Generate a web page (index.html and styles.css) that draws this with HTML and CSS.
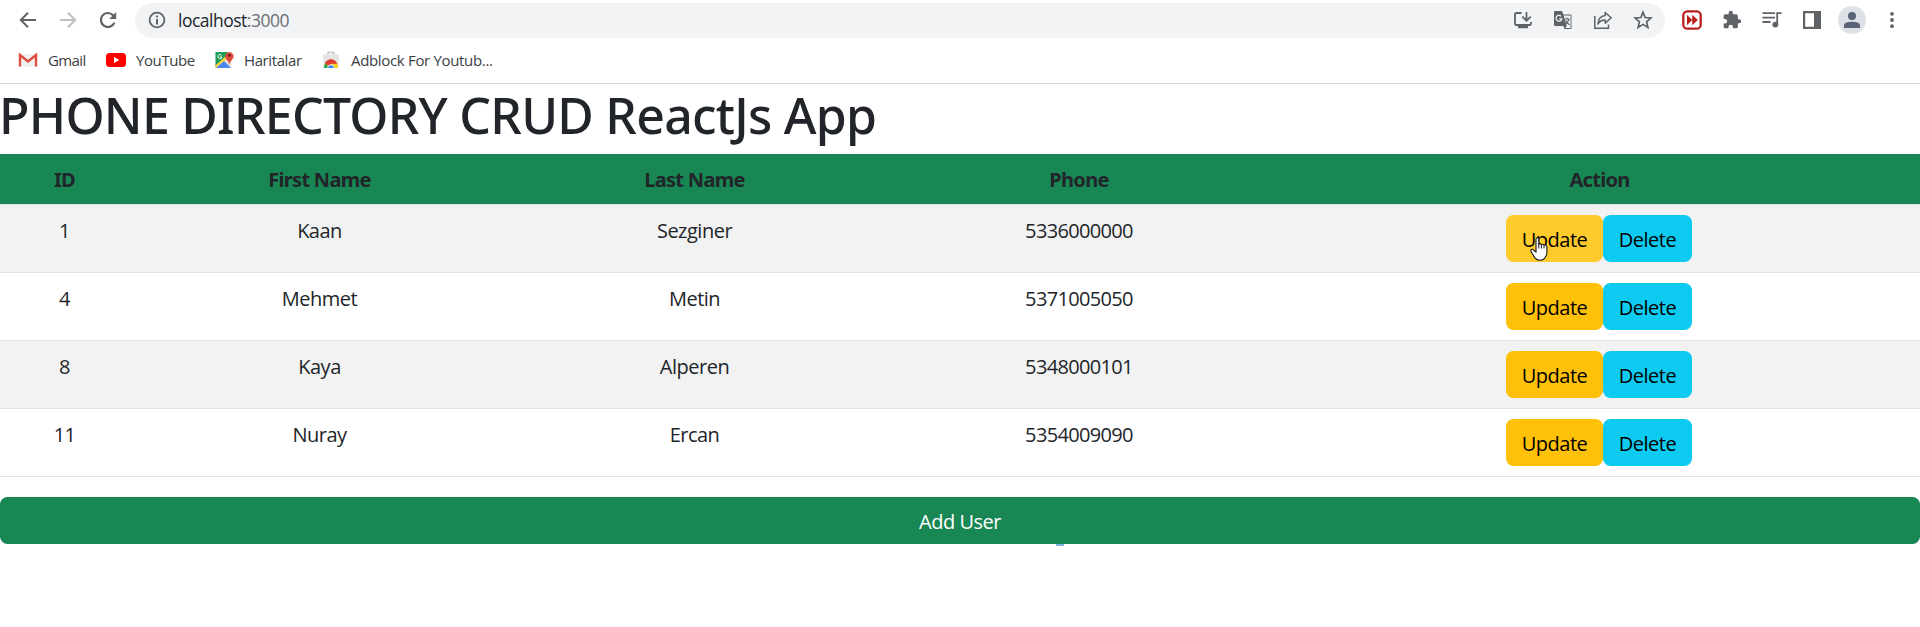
FILE: index.html
```
<!DOCTYPE html>
<html lang="en">
<head>
<meta charset="utf-8">
<title>Phone Directory</title>
<link rel="stylesheet" href="styles.css">
</head>
<body>
<header class="browser">
  <div class="toolbar">
    <nav class="nav">
      <svg class="nav-icon" width="20" height="20" viewBox="0 0 20 20" fill="none" stroke="#5f6368" stroke-width="2"><path d="M18 10H3M10 2.8L2.8 10l7.2 7.2"/></svg>
      <svg class="nav-icon" width="20" height="20" viewBox="0 0 20 20" fill="none" stroke="#bdc0c3" stroke-width="2"><path d="M2 10h15M10 2.8l7.2 7.2-7.2 7.2"/></svg>
      <svg class="nav-icon" width="20" height="20" viewBox="0 0 20 20" fill="none" stroke="#5f6368" stroke-width="2.2"><path d="M16.4 12.6A7 7 0 1 1 15 5.2L16.6 7"/><path d="M18.2 2v7h-7z" fill="#5f6368" stroke="none"/></svg>
    </nav>
    <div class="address">
      <svg class="info" width="18" height="18" viewBox="0 0 18 18"><circle cx="9" cy="9" r="7.4" fill="none" stroke="#5f6368" stroke-width="1.8"/><path d="M8 4.6h2v2H8zM8 8h2v5.4H8z" fill="#5f6368"/></svg>
      <span class="url">localhost<span class="port">:3000</span></span>
      <div class="address-actions">
        <svg width="20" height="20" viewBox="0 0 20 20" fill="none" stroke="#5f6368" stroke-width="1.8"><path d="M8.5 3H3.2Q2 3 2 4.2v9.6Q2 15 3.2 15h13.6Q18 15 18 13.8V12M13.5 2v8M9.3 6.6l4.2 4.2 4.2-4.2"/><path d="M5 15h10v3.200H5z" fill="#5f6368" stroke="none"/></svg>
        <svg width="20" height="20" viewBox="0 0 20 20"><path d="M2 1h7l1.3 3.6H17.500q1 0 1 1V18q0 1-1 1h-6L10.300 16H2.200Q1 16 1 15V2Q1 1 2 1z" fill="#5f6368"/><path d="M10.700 5.500h6.900v12.600H12.300l1.400-2z" fill="#f1f3f4"/><path d="M8.200 6.400A2.900 2.900 0 1 0 8.800 8.800H6.200" fill="none" stroke="#f1f3f4" stroke-width="1.300"/><path d="M11.800 9h5M14 7.500V9M16 9q-1 4-3.700 5.500M12.800 10.500q1 2.500 3.800 4.500" fill="none" stroke="#5f6368" stroke-width="1.100"/></svg>
        <svg width="20" height="20" viewBox="0 0 20 20" fill="none" stroke="#5f6368" stroke-width="1.500"><path d="M1.800 6v12.200H15.500V14.500"/><path d="M12.200 2.500l6 5.300-6 5.300V10Q7.500 9.800 5 14q.3-7.700 7.200-8.500z" stroke-linejoin="round"/></svg>
        <svg width="20" height="20" viewBox="0 0 20 20" fill="none" stroke="#5f6368" stroke-width="1.700"><path d="M10 2.300l2.200 5.200 5.700.5-4.300 3.800 1.300 5.600-4.900-3-4.900 3 1.300-5.600L2.100 8l5.700-.5z"/></svg>
      </div>
    </div>
    <div class="extensions">
      <svg width="20" height="20" viewBox="0 0 20 20"><rect x="1.300" y="1.300" width="17.400" height="17.400" rx="4" fill="#fff" stroke="#b9201d" stroke-width="2.300"/><path d="M5 4.800l5.200 5.200L5 15.200zM10.200 4.800l5.600 5.200-5.600 5.200z" fill="#b9201d"/></svg>
      <svg width="20" height="20" viewBox="0 0 24 24" fill="#5f6368"><path d="M20.500 11H19V7c0-1.100-.9-2-2-2h-4V3.500a2.500 2.500 0 0 0-5 0V5H4c-1.100 0-2 .9-2 2v3.800h1.500a2.700 2.700 0 0 1 0 5.400H2V20c0 1.100.9 2 2 2h3.800v-1.500a2.700 2.700 0 0 1 5.400 0V22H17c1.100 0 2-.9 2-2v-4h1.500a2.500 2.500 0 0 0 0-5z"/></svg>
      <svg width="20" height="20" viewBox="0 0 20 20" fill="none" stroke="#5f6368" stroke-width="1.800"><path d="M.5 3.200h12.500M.5 7.600h12.500M.5 12h8M15.200 14.500V3.200h4.300"/><circle cx="13.300" cy="14.600" r="2.900" fill="#5f6368" stroke="none"/></svg>
      <svg width="20" height="20" viewBox="0 0 20 20"><path d="M1 1h18v18H1zM3.200 3.200v13.600H12V3.200z" fill="#5f6368" fill-rule="evenodd"/></svg>
      <svg class="avatar" width="28" height="28" viewBox="0 0 28 28"><circle cx="14" cy="14" r="14" fill="#dee1e6"/><circle cx="14" cy="10" r="4" fill="#5a6377"/><path d="M6 22v-2.500Q6 15.800 14 15.800t8 3.700V22z" fill="#5a6377"/></svg>
      <svg width="20" height="20" viewBox="0 0 20 20" fill="#5f6368"><circle cx="10" cy="3.800" r="1.900"/><circle cx="10" cy="10" r="1.900"/><circle cx="10" cy="16.200" r="1.900"/></svg>
    </div>
  </div>
  <div class="bookmarks">
    <a class="bookmark gmail"><svg width="20" height="20" viewBox="0 0 20 20"><path d="M3 4h14v13H3z" fill="#f1f1f1"/><path d="M2 16.500V5l8 6.500L18 5v11.500" fill="none" stroke="#dc4b3e" stroke-width="2.400"/></svg><span>Gmail</span></a>
    <a class="bookmark youtube"><svg width="20" height="20" viewBox="0 0 20 20"><rect y="3" width="20" height="14" rx="3.500" fill="#f00"/><path d="M8 7l5.300 3L8 13z" fill="#fff"/></svg><span>YouTube</span></a>
    <a class="bookmark maps"><svg width="20" height="20" viewBox="0 0 20 20"><rect x="1.500" y="2" width="16" height="16" rx="1.500" fill="#e6e6e6"/><path d="M1.500 2h12L14 7 1.500 17.500z" fill="#1f9d58"/><path d="M2 18l8-7 7 7z" fill="#4a89f3"/><path d="M1.500 15.500L13 5l2 2L3 18H1.500z" fill="#fdd545"/><path d="M2 18l7.500-6.500L16 18z" fill="#4a89f3"/><path d="M7.500 5.200A2 2 0 1 0 8 7H6" fill="none" stroke="#fff"/><path d="M15.300 15q-.5-3.500-2.700-5.500a4.200 4.200 0 1 1 5.600 0Q15.800 11.500 15.300 15z" fill="#de4a3d"/><circle cx="15.400" cy="5.300" r="1.500" fill="#7b231e"/></svg><span>Haritalar</span></a>
    <a class="bookmark store"><svg width="20" height="20" viewBox="0 0 20 20"><path d="M7 5V2.500h6V5" fill="none" stroke="#c6c6c6" stroke-width="1.300"/><path d="M2 4.500h16L17.500 18h-15z" fill="#e4e4e4"/><path d="M3 18q0-8 7-8t7 8z" fill="#fbc917"/><path d="M3 18q0-3 1.300-5L8 18z" fill="#23a455"/><path d="M4 13.300q2-4 6-4t6.300 4.400H10L7.500 16z" fill="#dc3b30"/><path d="M6.400 18a3.600 3.600 0 0 1 7.200 0z" fill="#fff"/><path d="M7.200 18a2.800 2.800 0 0 1 5.600 0z" fill="#4285f4"/></svg><span>Adblock For Youtub...</span></a>
  </div>
</header>
<main>
  <h1 class="title">PHONE DIRECTORY CRUD ReactJs App</h1>
  <table class="directory">
    <colgroup><col class="col-id"><col class="col-first"><col class="col-last"><col class="col-phone"><col class="col-action"></colgroup>
    <thead>
      <tr><th>ID</th><th>First Name</th><th>Last Name</th><th>Phone</th><th>Action</th></tr>
    </thead>
    <tbody>
      <tr><td class="num">1</td><td>Kaan</td><td>Sezginer</td><td class="num">5336000000</td><td class="action-cell"><div class="actions"><button class="btn update hovered"><span>Update</span></button><button class="btn delete"><span>Delete</span></button>
        <svg class="pointer" width="20" height="24" viewBox="0 0 20 24"><path d="M6 2.200q0-1.500 1.400-1.500T8.800 2.200V7q1.300-.9 2.500.5 1.600-.7 2.600.6 2.400-.6 3 1.300v6q0 2.600-1.700 4.800-1.500 3-5.500 3-3.800 0-5.200-3.100L1.300 15Q.4 13 1.400 12.500q1.200-.7 2.600 1L6 15z" fill="#fff" stroke="#15171c" stroke-width="1.100"/><path d="M8.800 7v4.500M11.400 8v3.500M14 8.500v3" stroke="#15171c" fill="none"/></svg></div></td></tr>
      <tr><td class="num">4</td><td>Mehmet</td><td>Metin</td><td class="num">5371005050</td><td class="action-cell"><div class="actions"><button class="btn update"><span>Update</span></button><button class="btn delete"><span>Delete</span></button></div></td></tr>
      <tr><td class="num">8</td><td>Kaya</td><td>Alperen</td><td class="num">5348000101</td><td class="action-cell"><div class="actions"><button class="btn update"><span>Update</span></button><button class="btn delete"><span>Delete</span></button></div></td></tr>
      <tr><td class="num">11</td><td>Nuray</td><td>Ercan</td><td class="num">5354009090</td><td class="action-cell"><div class="actions"><button class="btn update"><span>Update</span></button><button class="btn delete"><span>Delete</span></button></div></td></tr>
    </tbody>
  </table>
  <button class="btn add"><span>Add User</span></button>
  <div class="marker"></div>
</main>
</body>
</html>
```
FILE: styles.css
```
* { box-sizing: border-box; }
body {
  margin: 0;
  background: #fff;
  color: #212529;
  font: 20px/30px "Open Sans", "Noto Sans", sans-serif;
  overflow: hidden;
}
svg { display: block; flex: none; }

.browser {
  height: 84px;
  border-bottom: 1px solid #d5d7da;
}
.toolbar {
  display: flex;
  align-items: center;
  height: 38px;
  padding: 3px 17px 0 18px;
}
.nav { display: flex; flex: none; gap: 20px; width: 117px; margin-top: -1px; }
.address {
  display: flex;
  flex: none;
  align-items: center;
  width: 1530px;
  height: 35px;
  padding: 0 12px 1px 13px;
  border-radius: 18px;
  background: #f1f3f4;
}
.url {
  margin-left: 12px;
  font-size: 17.5px;
  letter-spacing: -0.5px;
}
.port { color: #6b6f74; }
.address-actions { display: flex; gap: 20px; margin-left: auto; }
.extensions {
  display: flex;
  align-items: center;
  gap: 20px;
  margin: -1px 0 0 17px;
}
.avatar { margin: 0 -4px; }

.bookmarks {
  display: flex;
  height: 45px;
  align-items: center;
  padding: 0 0 1px 18px;
  font-size: 15px;
  line-height: 20px;
  color: #3c4043;
}
.bookmark { display: flex; align-items: center; gap: 10px; white-space: nowrap; letter-spacing: -0.4px; }
.gmail { width: 88px; letter-spacing: -0.6px; }
.youtube { width: 108px; }
.maps { width: 107px; }
.store { letter-spacing: -0.33px; }

.title {
  height: 60px;
  margin: 0 0 10px -1px;
  padding-top: 1px;
  font-family: "Noto Sans", "Open Sans", sans-serif;
  font-size: 50px;
  font-weight: 500;
  line-height: 60px;
  letter-spacing: -0.75px;
  white-space: nowrap;
}

.directory {
  width: 1920px;
  margin-bottom: 20px;
  table-layout: fixed;
  border-collapse: separate;
  border-spacing: 0;
  text-align: center;
}
.col-id { width: 129px; }
.col-first { width: 381px; }
.col-last { width: 369px; }
.col-phone { width: 400px; }
.col-action { width: 641px; }
.directory th {
  height: 51px;
  padding: 11px 10px 9px;
  border-bottom: 1px solid #dee2e6;
  background: #198754;
  background-clip: padding-box;
  font-family: "Noto Sans", "Open Sans", sans-serif;
  letter-spacing: -0.7px;
}
.directory td {
  height: 68px;
  padding: 11px 10px 9px;
  border-bottom: 1px solid #dee2e6;
  vertical-align: top;
  letter-spacing: -0.5px;
}
.directory td.action-cell { padding: 10px; }
.directory tbody tr:nth-child(odd) td { background: #f2f2f2; background-clip: padding-box; }
.directory td.num { letter-spacing: -0.66px; }

.actions { position: relative; display: flex; width: 186px; margin: 0 auto 0 217px; }
.btn {
  height: 47px;
  padding: 3px 0 0;
  border: 0;
  border-radius: 7.5px;
  font: inherit;
  letter-spacing: -0.5px;
}
.update { width: 97px; background: #ffc107; color: #000; }
.update.hovered { background: #ffca2c; }
.delete { width: 89px; background: #0dcaf0; color: #000; }
.pointer { position: absolute; left: 24px; top: 22px; }
.add {
  display: block;
  width: 100%;
  background: #198754;
  color: #fff;
}
.marker { width: 8px; height: 2px; margin-left: 1056px; background: #79b4dc; }
```
